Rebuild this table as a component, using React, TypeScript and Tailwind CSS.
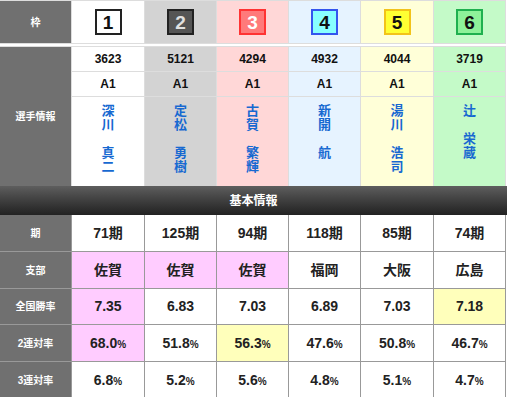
import React from 'react'

type Racer = {
  no: number
  id: string
  rank: string
  sei: string
  mei: string
  ki: string
  shibu: string
  win: string
  r2: string
  r3: string
}

const racers: Racer[] = [
  { no: 1, id: '3623', rank: 'A1', sei: '深川', mei: '真二', ki: '71期', shibu: '佐賀', win: '7.35', r2: '68.0', r3: '6.8' },
  { no: 2, id: '5121', rank: 'A1', sei: '定松', mei: '勇樹', ki: '125期', shibu: '佐賀', win: '6.83', r2: '51.8', r3: '5.2' },
  { no: 3, id: '4294', rank: 'A1', sei: '古賀', mei: '繁輝', ki: '94期', shibu: '佐賀', win: '7.03', r2: '56.3', r3: '5.6' },
  { no: 4, id: '4932', rank: 'A1', sei: '新開', mei: '航', ki: '118期', shibu: '福岡', win: '6.89', r2: '47.6', r3: '4.8' },
  { no: 5, id: '4044', rank: 'A1', sei: '湯川', mei: '浩司', ki: '85期', shibu: '大阪', win: '7.03', r2: '50.8', r3: '5.1' },
  { no: 6, id: '3719', rank: 'A1', sei: '辻', mei: '栄蔵', ki: '74期', shibu: '広島', win: '7.18', r2: '46.7', r3: '4.7' },
]

// 枠ごとの背景色
const colBg = ['bg-white', 'bg-[#d3d3d3]', 'bg-[#ffd7d7]', 'bg-[#e6f3ff]', 'bg-[#ffffd8]', 'bg-[#c4fac8]']

const boxCls = [
  'bg-white border-[#222] text-[#111]',
  'bg-[#555] border-[#222] text-[#e0e0e0]',
  'bg-[#ff7a7a] border-[#ff3333] text-white',
  'bg-[#88ffff] border-[#3355ee] text-[#111]',
  'bg-[#ffff33] border-[#f2c31a] text-[#111]',
  'bg-[#8ef29a] border-[#1fb04f] text-[#111]',
]

const PINK = 'bg-[#ffccff]'
const YELLOW = 'bg-[#ffffbb]'

const shibuHl = [PINK, PINK, PINK, '', '', '']
const winHl = [PINK, '', '', '', '', YELLOW]
const r2Hl = [PINK, '', YELLOW, '', '', '']

const cols = 'grid grid-cols-[71px_72px_71px_71px_71px_72px_71px] gap-px w-[506px]'

function Label({ children }: { children: React.ReactNode }) {
  return (
    <div className="bg-[#707070] text-white text-[10px] font-bold flex items-center justify-center">
      {children}
    </div>
  )
}

function Value({ bg, children }: { bg?: string; children: React.ReactNode }) {
  return (
    <div className={`${bg || 'bg-white'} flex items-center justify-center text-[14px] font-bold text-[#222]`}>
      {children}
    </div>
  )
}

function Pct({ v }: { v: string }) {
  return (
    <span>
      {v}
      <span className="text-[10px] font-bold">%</span>
    </span>
  )
}

export default function App() {
  return (
    <div
      className="w-[507px] h-[397px] bg-white overflow-hidden"
      style={{ fontFamily: '"Liberation Sans", Arial, "Noto Sans CJK JP", sans-serif' }}
    >
      {/* 枠番 */}
      <div className={`${cols} bg-[#dddddd] py-px pr-px`}>
        <div className="h-[42px] bg-[#707070] text-white text-[10px] font-bold flex items-center justify-center">枠</div>
        {racers.map((r, i) => (
          <div key={r.no} className={`${colBg[i]} flex items-center justify-center`}>
            <div
              className={`${boxCls[i]} w-[27px] h-[26px] border-2 flex items-center justify-center text-[19px] font-bold leading-none`}
            >
              {r.no}
            </div>
          </div>
        ))}
      </div>

      {/* 選手情報 */}
      <div className={`${cols} bg-[#dddddd] pt-px pr-px mt-[2px] grid-rows-[24px_24px_89px]`}>
        <div className="row-span-3 bg-[#707070] text-white text-[10px] font-bold flex items-center justify-center">
          選手情報
        </div>
        {racers.map((r, i) => (
          <div key={'id' + r.no} className={`${colBg[i]} flex items-center justify-center text-[12px] font-bold text-[#111]`}>
            {r.id}
          </div>
        ))}
        {racers.map((r, i) => (
          <div key={'rk' + r.no} className={`${colBg[i]} flex items-center justify-center text-[12px] font-bold text-[#111]`}>
            {r.rank}
          </div>
        ))}
        {racers.map((r, i) => (
          <div key={'nm' + r.no} className={`${colBg[i]} flex flex-col items-center pt-[7px] text-[13px] leading-[14px] font-bold text-[#1769d1]`}>
            {r.sei.split('').map((c, k) => (
              <span key={'s' + k}>{c}</span>
            ))}
            <span className="h-[14px]" />
            {r.mei.split('').map((c, k) => (
              <span key={'m' + k}>{c}</span>
            ))}
          </div>
        ))}
      </div>

      {/* 基本情報 */}
      <div className="h-[29px] bg-linear-to-b from-[#5e5e5e] to-[#222] text-white text-[12px] font-bold flex items-center justify-center">
        基本情報
      </div>

      <div className={`${cols} bg-[#999] pr-px grid-rows-[36px_36px_35px_36px_36px]`}>
        <Label>期</Label>
        {racers.map((r) => (
          <Value key={'ki' + r.no}>{r.ki}</Value>
        ))}

        <Label>支部</Label>
        {racers.map((r, i) => (
          <Value key={'sb' + r.no} bg={shibuHl[i]}>{r.shibu}</Value>
        ))}

        <Label>全国勝率</Label>
        {racers.map((r, i) => (
          <Value key={'w' + r.no} bg={winHl[i]}>{r.win}</Value>
        ))}

        <Label>2連対率</Label>
        {racers.map((r, i) => (
          <Value key={'r2' + r.no} bg={r2Hl[i]}>
            <Pct v={r.r2} />
          </Value>
        ))}

        <Label>3連対率</Label>
        {racers.map((r) => (
          <Value key={'r3' + r.no}>
            <Pct v={r.r3} />
          </Value>
        ))}
      </div>
    </div>
  )
}
